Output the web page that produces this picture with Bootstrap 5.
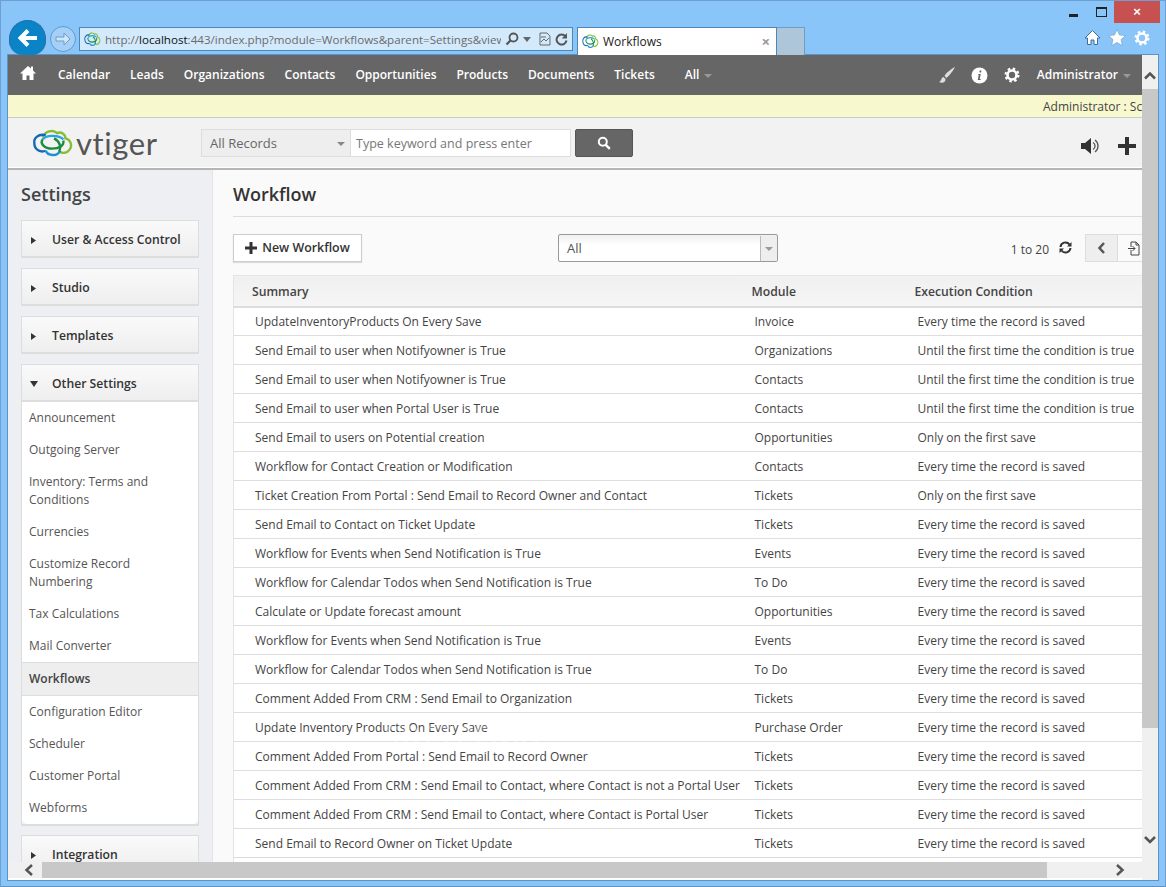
<!DOCTYPE html>
<html lang="en"><head><meta charset="utf-8"><title>Workflows</title>
<link rel="stylesheet" href="https://cdn.jsdelivr.net/npm/bootstrap@5.3.0/dist/css/bootstrap.min.css">
<style>
html,body{height:100%;margin:0;overflow:hidden}
body{font-family:"Open Sans","Liberation Sans",sans-serif;font-size:12px;color:#444;background:#8ac5f9}
.win{width:1166px;height:887px;background:#8ac5f9;border:1px solid #6f9fd0;border-bottom-color:#5f93c4;box-sizing:border-box}
.chrome{height:54px;position:relative;flex-shrink:0}
.backbtn{width:37px;height:35px;border-radius:18.5px 18.5px 14px 14px;background:#0a84c6;margin-left:8px;margin-top:19px;flex:none;position:relative;z-index:3;border:1px solid #2a6ea5;border-bottom:0}
.fwdbtn{width:26px;height:26px;border-radius:50%;border:1px solid #5e9ccc;background:#a4d0f8;margin:25px 0 0 4px;flex:none}
.urlbar{width:494px;height:24px;margin:26px 0 0 3px;background:#d3eafd;border:1px solid #4d86b8;padding:0 4px;color:#6b6b6b;font-size:11.6px;flex:none}
.urlbar b{font-weight:400;color:#111}
.urltext{width:401px;overflow:hidden;white-space:nowrap;padding:2px 0 0 4px}
.tabbar{width:200px;height:28px;margin:26px 0 0 4px;background:#fff;border:1px solid #4d86b8;border-bottom:0;padding:0 6px 0 4px;color:#222;font-size:12px;flex:none}
.tabplus{width:28px;height:28px;margin-top:26px;background:#aec6da;border:1px solid #6f9cc4;border-bottom:0;border-left:0;flex:none}
.tabx{color:#999;font-size:15px;font-weight:700;line-height:1}
.winctl{flex:none;width:146px}
.ctlrow{height:23px;padding-right:5px}
.ctlmin{width:9px;height:3px;background:#222;margin:13px 18px 0 0}
.ctlmax{width:11px;height:10px;border:1px solid #222;border-top-width:2px;margin:6px 7px 0 0}
.ctlclose{width:46px;height:22px;background:#c75050;color:#fff;font-size:13px;font-weight:700;text-align:center;line-height:21px;font-family:"Liberation Sans",sans-serif}
.iconrow{padding:5px 14px 0 0;gap:7px}
.vp{margin:0 7px 6px 7px;background:#fff;min-height:0;outline:1px solid #5f93c4}
.pagecol{min-width:0}
.clip{min-height:0;overflow:hidden;background:#fafafa}
.topnav{height:40px;background:#666;padding:0 12px;flex-wrap:nowrap;flex-shrink:0}
.topnav .nav-link{color:#fff;font-weight:600;font-size:12px;padding:0;white-space:nowrap;margin-right:20px}
.topnav .nav-link.navall{margin-left:10px}
.topnav .nav-link.navadmin{margin-right:-1px}
.topnav .nav-link.navhome{margin-right:22px}
.navic{margin-right:15px}
.capt{display:inline-block;border:4px solid transparent;border-top-color:#999;border-bottom:0;margin-left:5px;vertical-align:middle}
.noticebar{height:23px;flex-shrink:0;background:#f8f8cf;border-bottom:1px solid #ccc;padding-left:1035px;font-size:12px;line-height:24px;white-space:nowrap;overflow:hidden;color:#444}
.hdr{height:52px;flex-shrink:0;background:#f2f2f2;border-bottom:2px solid #b5b5b5;box-shadow:inset 0 -1px 0 #fff}
.logo{width:193px;padding-left:24px;flex:none;color:#555;font-size:31px;font-weight:400;font-family:"Lato",sans-serif;line-height:1;letter-spacing:.6px}
.logo span{margin-left:2px}
.recsel{width:150px;height:28px;background:#eee;border:1px solid #ddd;color:#666;padding:1px 8px 0;font-size:13px}
.recsel i{border:4px solid transparent;border-top-color:#888;border-bottom:0;margin-right:-3px}
.kw{width:220px;height:28px;border:1px solid #ddd;border-left:0;border-radius:0;font-size:12.5px;padding:0 4px 0 5px;color:#777;background:#fff;box-shadow:none}
.kw::placeholder{color:#777;opacity:1}
.srchbtn{width:58px;height:28px;background:#666;border:1px solid #555;border-radius:2px;margin-left:4px;padding:0}
.hdrright{margin-left:auto;padding:5px 6px 0 0;gap:18px}
.bodyrow{min-height:0}
.side{width:205px;flex:none;background:#eeeff3;border-right:1px solid #e4e4e4;padding:0 13px}
.side h4{font-size:18px;font-weight:600;color:#444;margin:12px 0 14px;line-height:24px}
.grp{border:1px solid #ddd;border-bottom:2px solid #ddd;border-radius:0;margin-bottom:10px;background:none;--bs-card-bg:transparent;flex-shrink:0}
.grphead{height:35px;flex-shrink:0;background:linear-gradient(#fafafa,#eee);padding:3px 0 0 8px;font-weight:600;color:#333;font-size:12.2px}
.grp.opened{margin-bottom:9px}
.grp.opened .grphead{border-bottom:1px solid #ddd;height:36px}
.tri{width:22px;flex:none;display:block;font-size:0}
.tri svg{display:block}
.grp .list-group-item{padding:7px;border:0;background:#fff;font-size:12px;color:#555;line-height:18px}
.grp .list-group-item.sel{background:#eee;font-weight:600;color:#444;padding:7px;border-top:1px solid #ddd;border-bottom:1px solid #ddd;margin:0}
.mainp{min-width:0;padding:0 0 0 20px;overflow:hidden}
.mainp h3{font-size:18px;font-weight:600;color:#333;margin:12px 0 0;line-height:24px;padding-bottom:10px;border-bottom:1px solid #ddd}
.tools{height:28px;margin-top:17px;width:918px}
.newbtn{width:129px;height:28px;background:#fff;border:1px solid #ccc;border-radius:0;box-shadow:0 1px 1px #ddd;font-weight:600;color:#333;font-size:12.4px;padding:0;gap:5px;flex-shrink:0}
.fltsel{width:220px;height:28px;margin-left:196px;background:linear-gradient(#f0f0f0,#fff 40%);border:1px solid #999;border-radius:2px;padding:1px 0 0 8px;color:#555;font-size:13px;flex-shrink:0}
.fltarrow{width:17px;height:100%;margin-left:auto;background:#eee;border-left:1px solid #bbb}
.fltarrow i{border:4px solid transparent;border-top-color:#999;border-bottom:0}
.pagecount{margin-left:auto;white-space:nowrap;padding-top:4px}
.rfr{margin:0 13px 2px 10px;flex-shrink:0}
.pagerbtn{width:33px;height:28px;background:#eee;border:1px solid #ddd;flex-shrink:0}
.pagerbtn.w{background:#fafafa;border-left:0}
.wtable{width:1000px;table-layout:fixed;margin:13px 0 0;border:1px solid #e4e4e4;--bs-table-bg:#fff;font-size:12px;color:#444}
.wtable th{font-weight:600;height:31px;padding:3px 0 0 18px;border-bottom:2px solid #ddd;color:#444;vertical-align:middle;font-size:12.2px;background:linear-gradient(#f0f0f0,#f5f5f5)}
.wtable td{height:29px;padding:2px 0 0 21px;border-bottom:1px solid #ddd;vertical-align:middle;white-space:nowrap;color:#444;line-height:18px}
.vs{width:16px;flex:none;background:#f0f0f0}
.vthumb{height:639px;background:#c8c8c8;margin-top:34px;flex-shrink:0}
.hs{height:18px;flex:none;background:#f0f0f0;border-bottom:2px solid #fff;box-sizing:border-box}
.hthumb{width:1005px;background:#c8c8c8;flex-shrink:0}
.arrow{display:block;flex:none}
.wmark{left:376px;top:664px;color:#fff;opacity:.3;font-size:27px;font-weight:600;letter-spacing:1.5px;pointer-events:none;line-height:1.2}
</style></head><body>
<svg width="0" height="0" class="d-block position-absolute"><defs>
<g id="vt" fill="none" stroke-width="2.300"><path d="M10 8C12 2 20 0 24 4C28 2 32 5 32 9C37 10 39 16 36 20C34 23 30 24 26 22" stroke="#86bd35"/><path d="M30 10C26 6 14 5 10 10" stroke="#26a5e0"/><path d="M10 10C7 14 12 19 19 19C26 19 31 16 30 11" stroke="#1a8c3f"/><path d="M13 6C6 4 1 9 2 14C2 20 8 23 13 21" stroke="#1468b8"/><path d="M13 21C15 26 24 27 27 21" stroke="#1d8ed4"/><path d="M21 9C27 12 28 18 26 22" stroke="#1a8c3f"/></g>
<g id="gear"><circle cx="12" cy="12" r="6" fill="none" stroke="currentColor" stroke-width="3.500"/><circle cx="12" cy="12" r="8.500" fill="none" stroke="currentColor" stroke-width="3" stroke-dasharray="3.300 3.370"/></g>
<path id="triR" d="M1 1l5 3.500l-5 3.500z" fill="#333"/>
</defs></svg>
<div class="win d-flex flex-column">
 <div class="chrome d-flex align-items-start">
  <div class="backbtn d-flex align-items-center justify-content-center"><svg width="22" height="20" viewBox="0 0 22 20"><path d="M20 10H4M11 2.500L3.500 10L11 17.500" fill="none" stroke="#fff" stroke-width="4"/></svg></div>
  <div class="fwdbtn d-flex align-items-center justify-content-center"><svg width="16" height="14" viewBox="0 0 16 14"><path d="M1 5h8V1l6 6l-6 6V9H1z" fill="#cfe6fb" stroke="#6d9dc5"/></svg></div>
  <div class="urlbar d-flex align-items-center">
   <svg width="17" height="15" viewBox="0 0 40 28" preserveAspectRatio="none" class="flex-shrink-0"><use href="#vt"/></svg>
   <div class="urltext">http://<b>localhost</b>:443/index.php?module=Workflows&amp;parent=Settings&amp;view=List</div>
   <svg width="14" height="14" viewBox="0 0 14 14" class="ms-1"><circle cx="8.500" cy="5.500" r="4" fill="none" stroke="#555" stroke-width="1.800"/><path d="M5.500 8.500L1.500 12.500" stroke="#555" stroke-width="2.200"/></svg>
   <svg width="8" height="5" viewBox="0 0 8 5" class="ms-1"><path d="M0 0h8L4 5z" fill="#666"/></svg>
   <svg width="12" height="14" viewBox="0 0 12 14" class="ms-2"><path d="M1 1h7l3 3v9H1z" fill="none" stroke="#666"/><path d="M2 10l3-3l2 2l3-3M2 5h5" fill="none" stroke="#666"/></svg>
   <svg width="13" height="13" viewBox="0 0 13 13" class="ms-1"><path d="M10.500 3.500a5 5 0 1 0 1 4" fill="none" stroke="#555" stroke-width="2"/><path d="M12 0v5.500H6.800z" fill="#555"/></svg>
  </div>
  <div class="tabbar d-flex align-items-center">
   <svg width="17" height="15" viewBox="0 0 40 28" preserveAspectRatio="none" class="me-1"><use href="#vt"/></svg><span class="flex-grow-1">Workflows</span><span class="tabx">×</span>
  </div>
  <div class="tabplus"></div>
  <div class="winctl ms-auto d-flex flex-column">
   <div class="ctlrow d-flex justify-content-end"><div class="ctlmin"></div><div class="ctlmax"></div><div class="ctlclose">×</div></div>
   <div class="iconrow d-flex justify-content-end text-white">
    <svg width="17" height="17" viewBox="0 0 17 17"><path d="M8.500 1.500L1 9h2.500v6.500h3.500V11h3v4.500h3.500V9H16z" fill="#fff" stroke="#3e6e99"/></svg>
    <svg width="18" height="17" viewBox="0 0 18 17"><path d="M9 .5l2.500 5.500l6 .6l-4.500 4l1.300 6L9 13.500L3.700 16.600l1.300-6l-4.500-4l6-.6z" fill="#fff" stroke="#6f9cc4" stroke-width=".6"/></svg>
    <svg width="18" height="18" viewBox="0 0 24 24" class="text-white"><use href="#gear"/></svg>
   </div>
  </div>
 </div>
 <div class="vp d-flex flex-grow-1">
  <div class="pagecol d-flex flex-column flex-grow-1">
   <div class="clip d-flex flex-column flex-grow-1 position-relative">
    <nav class="navbar topnav">
     <div class="navbar-nav flex-row align-items-center w-100">
      <a class="nav-link navhome" href="#"><svg width="16" height="16" viewBox="0 0 16 16" class="d-block mb-1"><path d="M8 1L0 8.500h2.500V15h4v-4.500h3V15h4V8.500H16l-3-3V1.500h-2v2z" fill="#fff"/></svg></a>
      <a class="nav-link" href="#">Calendar</a><a class="nav-link" href="#">Leads</a><a class="nav-link" href="#">Organizations</a><a class="nav-link" href="#">Contacts</a><a class="nav-link" href="#">Opportunities</a><a class="nav-link" href="#">Products</a><a class="nav-link" href="#">Documents</a><a class="nav-link" href="#">Tickets</a>
      <a class="nav-link navall" href="#">All<span class="capt"></span></a>
      <div class="ms-auto d-flex align-items-center">
       <svg width="18" height="18" viewBox="0 0 18 18" class="navic"><path d="M17 1C13 3 8 7 6.500 10l2 2C11 10 15 5 17 1zM5.500 11C3 11 4 15 1 16c3 1.500 7 .5 6.500-3z" fill="#ddd"/></svg>
       <svg width="17" height="17" viewBox="0 0 17 17" class="navic"><circle cx="8.500" cy="8.500" r="8" fill="#fff"/><path d="M7.500 7h2.300l-1.100 5h1v1H6.700l1-5h-.8zM8.500 3.500h1.800v2H8.500z" fill="#666"/></svg>
       <svg width="18" height="18" viewBox="0 0 24 24" class="text-white me-3"><use href="#gear"/></svg>
       <a class="nav-link navadmin" href="#">Administrator<span class="capt"></span></a>
      </div>
     </div>
    </nav>
    <div class="noticebar">Administrator : Scheduled Import</div>
    <div class="hdr d-flex align-items-center">
     <div class="logo d-flex align-items-center"><svg width="42" height="29" viewBox="0 0 40 28"><use href="#vt"/></svg><span>vtiger</span></div>
     <div class="recsel d-flex align-items-center justify-content-between">All Records<i></i></div>
     <input class="form-control kw" placeholder="Type keyword and press enter">
     <button class="btn srchbtn d-flex align-items-center justify-content-center"><svg width="14" height="14" viewBox="0 0 14 14"><circle cx="5.800" cy="5.800" r="4" fill="none" stroke="#fff" stroke-width="2"/><path d="M8.800 8.800l4 4" stroke="#fff" stroke-width="2.500"/></svg></button>
     <div class="hdrright d-flex align-items-center">
      <svg width="19" height="18" viewBox="0 0 19 18"><path d="M0 6h4l6-5v16l-6-5H0z" fill="#333"/><path d="M12 5.500a4 4 0 0 1 0 7M14 3a7.500 7.500 0 0 1 0 12" fill="none" stroke="#555" stroke-width="1.300"/></svg>
      <svg width="18" height="18" viewBox="0 0 18 18"><path d="M7 0h4v7h7v4h-7v7H7v-7H0V7h7z" fill="#333"/></svg>
     </div>
    </div>
    <div class="bodyrow d-flex flex-grow-1 overflow-hidden">
     <aside class="side">
      <h4>Settings</h4>
      <div class="card grp"><div class="grphead d-flex align-items-center"><span class="tri"><svg width="8" height="9"><use href="#triR"/></svg></span>User &amp; Access Control</div></div>
      <div class="card grp"><div class="grphead d-flex align-items-center"><span class="tri"><svg width="8" height="9"><use href="#triR"/></svg></span>Studio</div></div>
      <div class="card grp"><div class="grphead d-flex align-items-center"><span class="tri"><svg width="8" height="9"><use href="#triR"/></svg></span>Templates</div></div>
      <div class="card grp opened"><div class="grphead d-flex align-items-center"><span class="tri"><svg width="9" height="8"><path d="M0 1h8L4 7z" fill="#333"/></svg></span>Other Settings</div>
       <div class="list-group list-group-flush">
        <a class="list-group-item" href="#">Announcement</a>
        <a class="list-group-item" href="#">Outgoing Server</a>
        <a class="list-group-item" href="#">Inventory: Terms and Conditions</a>
        <a class="list-group-item" href="#">Currencies</a>
        <a class="list-group-item" href="#">Customize Record Numbering</a>
        <a class="list-group-item" href="#">Tax Calculations</a>
        <a class="list-group-item" href="#">Mail Converter</a>
        <a class="list-group-item sel" href="#">Workflows</a>
        <a class="list-group-item" href="#">Configuration Editor</a>
        <a class="list-group-item" href="#">Scheduler</a>
        <a class="list-group-item" href="#">Customer Portal</a>
        <a class="list-group-item" href="#">Webforms</a>
       </div></div>
      <div class="card grp"><div class="grphead d-flex align-items-center"><span class="tri"><svg width="8" height="9"><use href="#triR"/></svg></span>Integration</div></div>
     </aside>
     <main class="mainp flex-grow-1">
      <h3>Workflow</h3>
      <div class="tools d-flex align-items-center">
       <button class="btn newbtn d-flex align-items-center justify-content-center"><svg width="12" height="12" viewBox="0 0 12 12"><path d="M4.500 0h3v4.500H12v3H7.500V12h-3V7.500H0v-3h4.500z" fill="#333"/></svg>New Workflow</button>
       <div class="fltsel d-flex align-items-center">All<span class="fltarrow d-flex align-items-center justify-content-center"><i></i></span></div>
       <span class="pagecount">1 to 20</span>
       <svg width="13" height="13" viewBox="0 0 13 13" class="rfr"><path d="M1.500 6a5 5 0 0 1 9-2.500M11.500 7a5 5 0 0 1-9 2.500" fill="none" stroke="#333" stroke-width="2"/><path d="M12.500 1v4.500H8zM.5 12V7.500H5z" fill="#333"/></svg>
       <span class="pagerbtn d-flex align-items-center justify-content-center"><svg width="9" height="12" viewBox="0 0 9 12"><path d="M7 1L2.500 6L7 11" fill="none" stroke="#555" stroke-width="2.500"/></svg></span>
       <span class="pagerbtn w d-flex align-items-center justify-content-center"><svg width="14" height="15" viewBox="0 0 14 15"><path d="M4 6V1h5l3 3v10H4V9M9 1v3h3M1 7.500h7M5.500 5l2.500 2.500L5.500 10" fill="none" stroke="#444"/></svg></span>
      </div>
      <table class="table wtable">
       <colgroup><col style="width:500px"><col style="width:163px"><col></colgroup>
       <thead><tr><th>Summary</th><th>Module</th><th>Execution Condition</th></tr></thead>
       <tbody>
<tr><td>UpdateInventoryProducts On Every Save</td><td>Invoice</td><td>Every time the record is saved</td></tr>
<tr><td>Send Email to user when Notifyowner is True</td><td>Organizations</td><td>Until the first time the condition is true</td></tr>
<tr><td>Send Email to user when Notifyowner is True</td><td>Contacts</td><td>Until the first time the condition is true</td></tr>
<tr><td>Send Email to user when Portal User is True</td><td>Contacts</td><td>Until the first time the condition is true</td></tr>
<tr><td>Send Email to users on Potential creation</td><td>Opportunities</td><td>Only on the first save</td></tr>
<tr><td>Workflow for Contact Creation or Modification</td><td>Contacts</td><td>Every time the record is saved</td></tr>
<tr><td>Ticket Creation From Portal : Send Email to Record Owner and Contact</td><td>Tickets</td><td>Only on the first save</td></tr>
<tr><td>Send Email to Contact on Ticket Update</td><td>Tickets</td><td>Every time the record is saved</td></tr>
<tr><td>Workflow for Events when Send Notification is True</td><td>Events</td><td>Every time the record is saved</td></tr>
<tr><td>Workflow for Calendar Todos when Send Notification is True</td><td>To Do</td><td>Every time the record is saved</td></tr>
<tr><td>Calculate or Update forecast amount</td><td>Opportunities</td><td>Every time the record is saved</td></tr>
<tr><td>Workflow for Events when Send Notification is True</td><td>Events</td><td>Every time the record is saved</td></tr>
<tr><td>Workflow for Calendar Todos when Send Notification is True</td><td>To Do</td><td>Every time the record is saved</td></tr>
<tr><td>Comment Added From CRM : Send Email to Organization</td><td>Tickets</td><td>Every time the record is saved</td></tr>
<tr><td>Update Inventory Products On Every Save</td><td>Purchase Order</td><td>Every time the record is saved</td></tr>
<tr><td>Comment Added From Portal : Send Email to Record Owner</td><td>Tickets</td><td>Every time the record is saved</td></tr>
<tr><td>Comment Added From CRM : Send Email to Contact, where Contact is not a Portal User</td><td>Tickets</td><td>Every time the record is saved</td></tr>
<tr><td>Comment Added From CRM : Send Email to Contact, where Contact is Portal User</td><td>Tickets</td><td>Every time the record is saved</td></tr>
<tr><td>Send Email to Record Owner on Ticket Update</td><td>Tickets</td><td>Every time the record is saved</td></tr>
<tr><td>&nbsp;</td><td></td><td></td></tr>
       </tbody>
      </table>
     </main>
    </div>
    <span class="wmark position-absolute" aria-hidden="true">SOFTPEDIA</span>
   </div>
   <div class="hs d-flex">
    <svg class="arrow" width="34" height="16" viewBox="0 0 34 16"><path d="M24 3L18.500 8L24 13" fill="none" stroke="#555" stroke-width="2.500"/></svg>
    <div class="hthumb"></div>
    <svg class="arrow ms-auto" width="34" height="16" viewBox="0 0 34 16"><path d="M9 3L14.500 8L9 13" fill="none" stroke="#555" stroke-width="2.500"/></svg>
   </div>
  </div>
  <div class="vs d-flex flex-column position-relative">
   <svg class="arrow position-absolute top-0 start-0" width="16" height="34" viewBox="0 0 16 34"><path d="M3 23.500L8 18.500L13 23.500" fill="none" stroke="#555" stroke-width="2.500"/></svg>
   <div class="vthumb"></div>
   <svg class="arrow mt-auto mb-4" width="16" height="34" viewBox="0 0 16 34"><path d="M3 15L8 20L13 15" fill="none" stroke="#555" stroke-width="2.500"/></svg>
  </div>
 </div>
</div>
</body></html>
